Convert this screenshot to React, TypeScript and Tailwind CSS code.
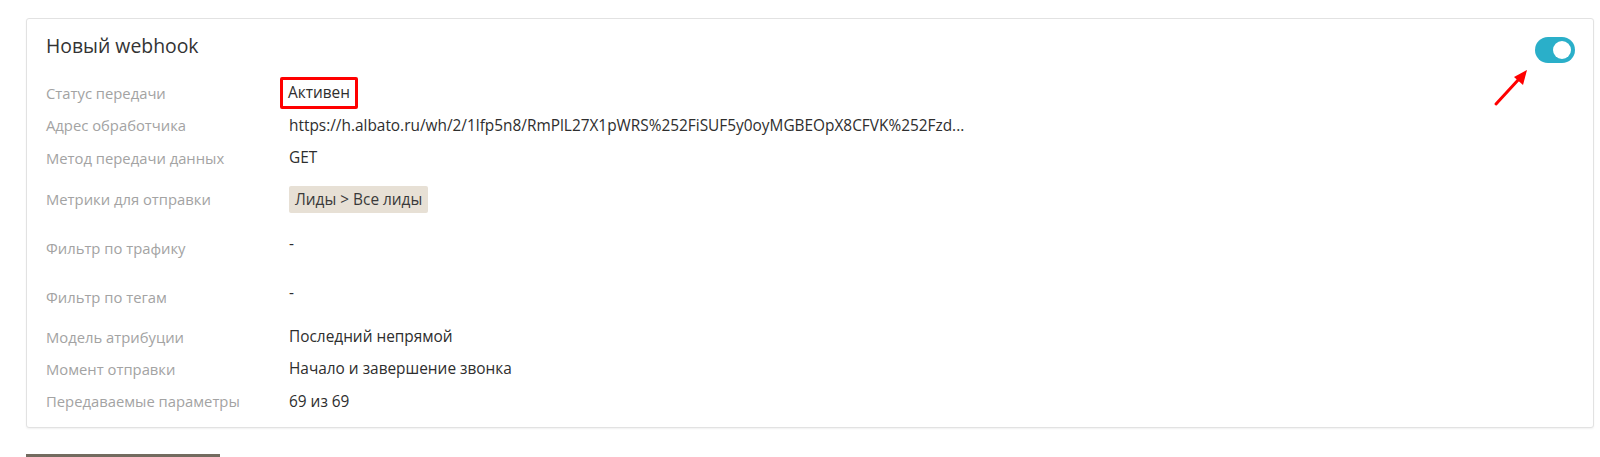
function Row({ label, children, h, labelPt, valuePt }: { label: string; children: React.ReactNode; h: string; labelPt?: string; valuePt?: string }) {
  const top = labelPt !== undefined;
  return (
    <div className={`flex ${h} ${top ? "items-start" : "items-center"}`}>
      <div className={`w-[243px] shrink-0 text-[14.8px] text-[#a3a3a3] ${top ? labelPt : ""}`}>{label}</div>
      <div className={`text-[15.4px] text-[#2e2e2e] ${top ? valuePt : ""}`}>{children}</div>
    </div>
  );
}

export default function App() {
  return (
    <div className="h-[457px] overflow-hidden bg-white pt-[18px] pl-[26px] pr-[6px]" style={{ fontFamily: '"Open Sans", "Noto Sans", sans-serif' }}>
      <div className="relative rounded-[3px] border border-[#e2e2e2] bg-white pl-[19px] pt-[14px] pb-[9px] shadow-[0_1px_2px_rgba(0,0,0,0.06)]">
        <h2 className="text-[19.4px] leading-[26px] text-[#333]">Новый webhook</h2>

        {/* тумблер */}
        <div className="absolute right-[18px] top-[18px] flex h-[26px] w-[40px] items-center justify-end rounded-full bg-[#2aafc9] pr-[4px]">
          <div className="h-[18px] w-[18px] rounded-full bg-white" />
        </div>
        <svg className="absolute right-[62px] top-[48px]" width="38" height="40" viewBox="0 0 38 40">
          <line x1="3" y1="37" x2="26" y2="12" stroke="#ff0000" strokeWidth="3" strokeLinecap="round" />
          <polygon points="34,3 21,10 30,18" fill="#ff0000" />
        </svg>

        <div className="mt-[18px]">
          <Row label="Статус передачи" h="h-[32px]">
            <span className="-ml-[9px] inline-block rounded-[2px] border-[3px] border-[#ff0000] px-[5px] py-[3px] leading-[20px]">Активен</span>
          </Row>
          <Row label="Адрес обработчика" h="h-[33px]">
            https://h.albato.ru/wh/2/1lfp5n8/RmPlL27X1pWRS%252FiSUF5y0oyMGBEOpX8CFVK%252Fzd...
          </Row>
          <Row label="Метод передачи данных" h="h-[32px]">GET</Row>
          <Row label="Метрики для отправки" h="h-[50px]">
            <span className="inline-block rounded-[2px] bg-[#e7e0d5] px-[6px] py-[3px] leading-[21px] text-[#3a3a3a]">Лиды &gt; Все лиды</span>
          </Row>
          <Row label="Фильтр по трафику" h="h-[47px]" labelPt="pt-[13px]" valuePt="pt-[8px]">-</Row>
          <Row label="Фильтр по тегам" h="h-[50px]" labelPt="pt-[15px]" valuePt="pt-[10px]">-</Row>
          <Row label="Модель атрибуции" h="h-[32px]">Последний непрямой</Row>
          <Row label="Момент отправки" h="h-[32px]">Начало и завершение звонка</Row>
          <Row label="Передаваемые параметры" h="h-[33px]">69 из 69</Row>
        </div>
      </div>

      <div className="mt-[26px] h-[40px] w-[194px] bg-[#736b5f]" />
    </div>
  );
}
